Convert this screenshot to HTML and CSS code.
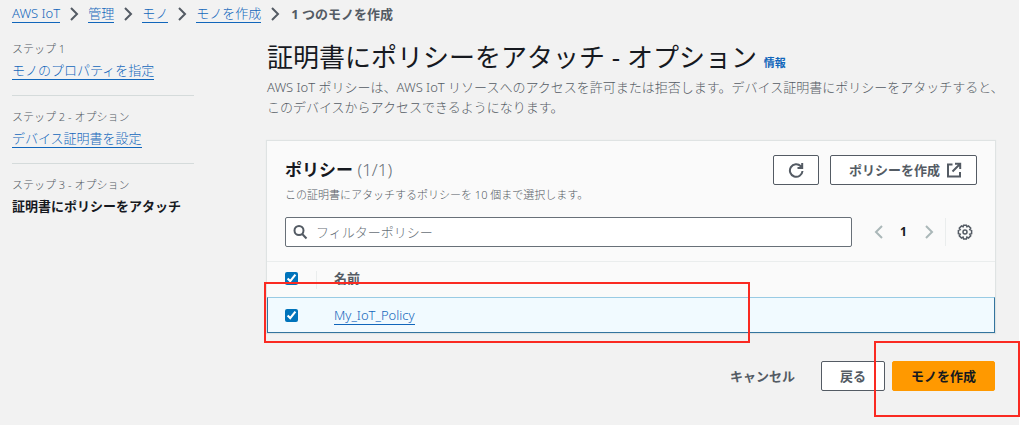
FILE: index.html
```html
<!DOCTYPE html>
<html lang="ja">

<head>
    <meta charset="utf-8">
    <title>1 つのモノを作成</title>
    <link rel="stylesheet" href="styles.css">
</head>

<body>
    <div class="app">
        <nav class="breadcrumb">
            <a href="#">AWS IoT</a>
            <svg class="sep" viewBox="0 0 10 14"><path d="M2 1l6 6-6 6"/></svg>
            <a href="#">管理</a>
            <svg class="sep" viewBox="0 0 10 14"><path d="M2 1l6 6-6 6"/></svg>
            <a href="#">モノ</a>
            <svg class="sep" viewBox="0 0 10 14"><path d="M2 1l6 6-6 6"/></svg>
            <a href="#">モノを作成</a>
            <svg class="sep" viewBox="0 0 10 14"><path d="M2 1l6 6-6 6"/></svg>
            <span class="current">1 つのモノを作成</span>
        </nav>
        <div class="layout">
            <ul class="steps">
                <li>
                    <span class="step-label">ステップ 1</span>
                    <div class="step-name"><a href="#">モノのプロパティを指定</a></div>
                </li>
                <li>
                    <span class="step-label">ステップ 2 - オプション</span>
                    <div class="step-name"><a href="#">デバイス証明書を設定</a></div>
                </li>
                <li>
                    <span class="step-label">ステップ 3 - オプション</span>
                    <div class="step-name active">証明書にポリシーをアタッチ</div>
                </li>
            </ul>
            <main class="content">
                <h1>証明書にポリシーをアタッチ - オプション <a class="info" href="#">情報</a></h1>
                <p class="desc">AWS IoT ポリシーは、AWS IoT リソースへのアクセスを許可または拒否します。デバイス証明書にポリシーをアタッチすると、<br>このデバイスからアクセスできるようになります。</p>

                <section class="panel">
                    <div class="panel-head">
                        <div class="title-row">
                            <h2>ポリシー <span class="count">(1/1)</span></h2>
                            <button class="btn btn-icon" type="button" aria-label="更新">
                                <svg class="icon" viewBox="0 0 16 16"><path d="M14.500 9A6.300 6.300 0 1 1 12.800 4.200L14 5.400M14.200 1v5H9.500"/></svg>
                            </button>
                            <button class="btn btn-create" type="button">ポリシーを作成
                                <svg class="icon" viewBox="0 0 16 16"><path d="M6.500 2.500H2v12h12V10M9 1.800h5.200V7M14 2L6.500 9.500"/></svg>
                            </button>
                        </div>
                        <p class="hint">この証明書にアタッチするポリシーを 10 個まで選択します。</p>
                        <div class="tools">
                            <label class="search">
                                <svg class="icon" viewBox="0 0 16 16"><circle cx="7" cy="6.500" r="4.500"/><path d="M10.200 10l4.300 4.500"/></svg>
                                <input type="text" placeholder="フィルターポリシー" aria-label="フィルターポリシー">
                            </label>
                            <div class="pager">
                                <button type="button" aria-label="前へ"><svg class="arrow" viewBox="0 0 10 14"><path d="M8 1L2 7l6 6"/></svg></button>
                                <button class="page" type="button">1</button>
                                <button type="button" aria-label="次へ"><svg class="arrow" viewBox="0 0 10 14"><path d="M2 1l6 6-6 6"/></svg></button>
                            </div>
                            <button class="settings" type="button" aria-label="設定">
                                <svg class="icon" viewBox="0 0 16 16"><path d="M6.600 1.200h2.800l.5 1.600 1.600-.8 2.200 2.200-.9 1.500 1.800.7v3.200l-1.800.6.9 1.600-2.200 2.200-1.600-.9-.5 1.800H6.600l-.5-1.800-1.600.9-2.200-2.200.9-1.600-1.800-.6V6.400l1.800-.7-.9-1.500L4.500 2l1.600.8z"/><circle cx="8" cy="8" r="2"/></svg>
                            </button>
                        </div>
                    </div>
                    <table>
                        <thead>
                            <tr>
                                <th class="check"><input type="checkbox" checked aria-label="すべて選択"></th>
                                <th class="name">名前</th>
                            </tr>
                        </thead>
                        <tbody>
                            <tr class="selected">
                                <td class="check"><input type="checkbox" checked aria-label="My_IoT_Policy"></td>
                                <td class="name"><a href="#">My_IoT_Policy</a></td>
                            </tr>
                        </tbody>
                    </table>
                    <div class="mark mark-row"></div>
                </section>

                <div class="actions">
                    <button class="btn-link" type="button">キャンセル</button>
                    <button class="btn btn-back" type="button">戻る</button>
                    <div class="submit">
                        <button class="btn btn-primary" type="button">モノを作成</button>
                        <div class="mark mark-submit"></div>
                    </div>
                </div>
            </main>
        </div>
    </div>
</body>

</html>
```

FILE: styles.css
```css
* {
    box-sizing: border-box;
    margin: 0;
    padding: 0;
}

body {
    background: #fff;
    color: #545b64;
    font: 300 13px/20px "Noto Sans", "Noto Sans CJK JP", sans-serif;
}

a {
    color: #1166bb;
    text-decoration: none;
    border-bottom: 1px solid #1166bb;
}

button,
input {
    font: inherit;
    color: inherit;
}

svg {
    display: block;
    flex: none;
    fill: none;
    stroke: #545b64;
    stroke-width: 2;
}

.app {
    min-height: calc(100vh - 8px);
    margin: 0 7px 8px 0;
    padding: 4px 24px 0 12px;
    background: #f2f2f2;
}

.breadcrumb {
    display: flex;
    align-items: center;
    gap: 9px;
}

.breadcrumb a {
    line-height: 17px;
}

.sep {
    width: 10px;
    height: 14px;
}

.current {
    margin-left: 2px;
    font-weight: 700;
}

.layout {
    display: flex;
    gap: 73px;
    padding-top: 15px;
}

.steps {
    flex: none;
    width: 182px;
    list-style: none;
}

.steps li + li {
    margin-top: 14px;
    padding-top: 11px;
    border-top: 1px solid #d5dbdb;
}

.step-label {
    display: block;
    font-size: 11px;
}

.step-name {
    line-height: 22px;
}

.active {
    color: #16191f;
    font-weight: 700;
}

.content {
    flex: 1;
    min-width: 0;
}

h1 {
    padding: 2px 0 4px;
    color: #16191f;
    font-size: 26px;
    font-weight: 400;
    line-height: 32px;
    white-space: nowrap;
}

.info {
    border: 0;
    font-size: 11px;
    font-weight: 700;
    line-height: 11px;
}

.desc {
    white-space: nowrap;
}

.panel {
    position: relative;
    margin-top: 24px;
    background: #fafafa;
    box-shadow: 0 0 1px 1px #dfe3e3;
}

.panel-head {
    padding: 14px 18px 14px;
    border-bottom: 1px solid #eaeded;
}

.title-row {
    display: flex;
    align-items: center;
    gap: 11px;
}

h2 {
    flex: 1;
    color: #16191f;
    font-size: 17px;
    line-height: 24px;
}

.count {
    color: #687078;
    font-weight: 300;
}

.btn {
    display: flex;
    align-items: center;
    justify-content: center;
    gap: 6px;
    height: 30px;
    padding: 0 18px;
    border: 1px solid #545b64;
    border-radius: 2px;
    background: #fff;
    font-weight: 700;
    white-space: nowrap;
}

.btn-icon {
    padding: 0 14px;
}

.btn-create {
    padding-right: 14px;
}

.icon {
    width: 16px;
    height: 16px;
}

.hint {
    font-size: 11px;
}

.tools {
    display: flex;
    align-items: center;
    margin-top: 12px;
}

.search {
    display: flex;
    flex: 1;
    align-items: center;
    gap: 8px;
    height: 30px;
    padding: 0 6px;
    border: 1px solid #687078;
    border-radius: 2px;
    background: #fff;
}

.search input {
    flex: 1;
    min-width: 0;
    border: 0;
    outline: 0;
    background: none;
}

.search input::placeholder {
    color: #687078;
}

.pager {
    display: flex;
    margin-left: 14px;
    padding-right: 4px;
    border-right: 1px solid #eaeded;
}

.pager button,
.settings {
    display: flex;
    align-items: center;
    justify-content: center;
    width: 25px;
    height: 28px;
    border: 0;
    background: none;
}

.pager .page {
    color: #16191f;
    font-size: 12px;
    font-weight: 700;
}

.arrow {
    width: 10px;
    height: 14px;
    stroke: #aab7b8;
}

.settings {
    margin-left: 6px;
}

.settings svg {
    stroke-width: 1.5;
}

table {
    width: 100%;
    border-collapse: separate;
    border-spacing: 0;
    text-align: left;
}

th,
td {
    height: 35px;
    line-height: 18px;
}

th {
    padding-bottom: 3px;
}

.check {
    width: 49px;
    padding-left: 18px;
}

.check input {
    display: block;
    width: 13px;
    height: 13px;
    accent-color: #0073bb;
}

.name {
    padding-left: 18px;
}

th.name {
    background: linear-gradient(#eaeded, #eaeded) left center / 1px 18px no-repeat;
}

.selected td {
    height: 36px;
    border-top: 1px solid #99cbe4;
    border-bottom: 1px solid #33749e;
    background: #f1faff;
}

.selected td:first-child {
    border-left: 1px solid #33749e;
    padding-left: 17px;
}

.selected td:last-child {
    border-right: 1px solid #33749e;
}

.actions {
    display: flex;
    justify-content: flex-end;
    margin-top: 28px;
}

.btn-link {
    margin-right: 8px;
    padding: 0 18px;
    border: 0;
    background: none;
    font-weight: 700;
}

.btn-back {
    margin-right: 7px;
}

.submit {
    position: relative;
}

.btn-primary {
    border-color: #ff9900;
    background: #ff9900;
    color: #16191f;
}

/* red callout frames */
.mark {
    position: absolute;
    border: 2px solid #fa2a22;
    pointer-events: none;
}

.mark-row {
    left: -3px;
    right: 245px;
    bottom: -10px;
    height: 61px;
}

.mark-submit {
    top: -20px;
    right: -25px;
    bottom: -26px;
    left: -18px;
}
```
